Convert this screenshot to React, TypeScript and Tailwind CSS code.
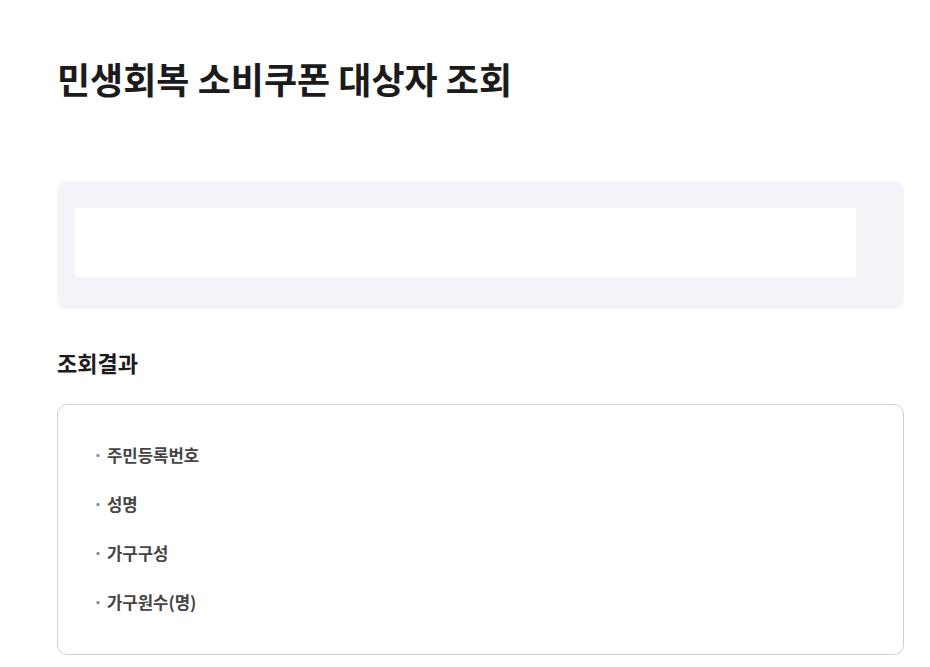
export default function App() {
  const items = ["주민등록번호", "성명", "가구구성", "가구원수(명)"];
  return (
    <div
      className="min-h-[667px] bg-white"
      style={{ fontFamily: '"Noto Sans CJK KR", "Noto Sans", sans-serif' }}
    >
      <div className="ml-[57px] w-[847px] pt-[52px]">
        <h1 className="text-[36px] font-bold leading-[52px] text-[#1b1b1b]">
          민생회복 소비쿠폰 대상자 조회
        </h1>
        <div className="mt-[77px] h-[128px] rounded-[10px] bg-[#f3f4f9] pl-[18px] pt-[27px]">
          <div className="h-[69px] w-[781px] bg-white" />
        </div>
        <h2 className="mt-[37px] text-[22px] font-bold leading-[32px] text-[#1b1b1b]">
          조회결과
        </h2>
        <div className="mt-[26px] h-[251px] rounded-[10px] border border-[#cfcfcf] pl-[35px] pt-[38px]">
          <ul className="flex flex-col gap-[25px]">
            {items.map((t) => (
              <li key={t} className="flex items-center text-[16.7px] font-bold leading-[24px] text-[#444]">
                <span className="w-[14px] text-[#888]">·</span>
                <span>{t}</span>
              </li>
            ))}
          </ul>
        </div>
      </div>
    </div>
  );
}
